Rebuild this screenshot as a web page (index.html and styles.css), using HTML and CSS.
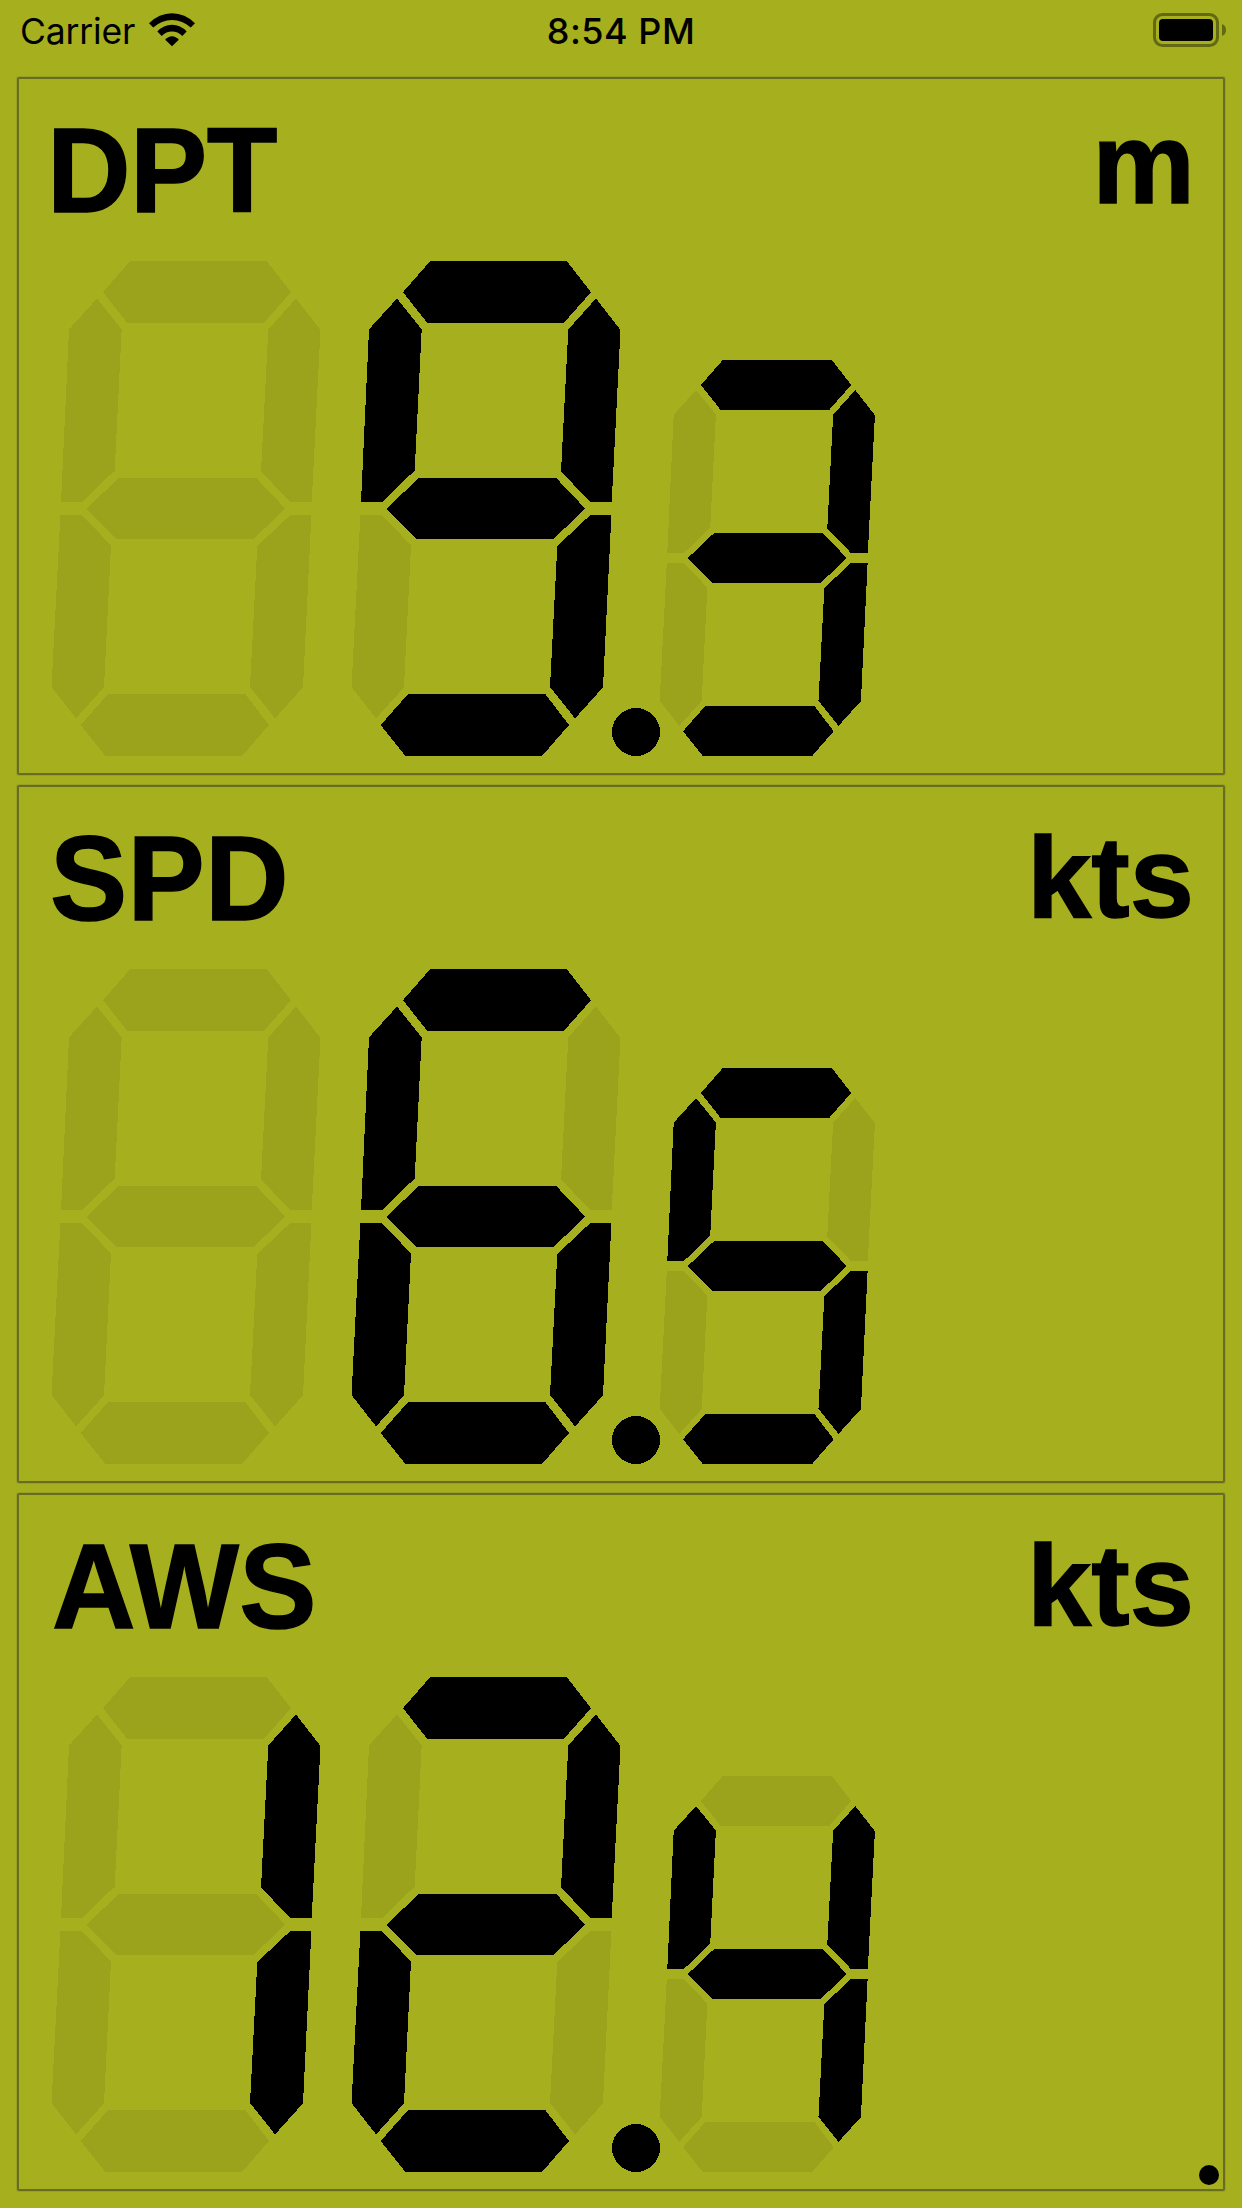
FILE: index.html
```html
<!DOCTYPE html>
<html lang="en">
<head>
<meta charset="utf-8">
<title>Instruments</title>
<link rel="stylesheet" href="styles.css">
</head>
<body>
<svg class="defs" width="0" height="0" aria-hidden="true">
  <defs>
    <polygon id="a" points="79.3,0 215.7,0 240,31.2 212.7,62 76.3,62 52,31.2"/>
    <polygon id="b" points="245,37.5 269.5,69 260.7,241 239.3,241 210,210.5 217.3,68.3"/>
    <polygon id="c" points="239.3,254 260.4,254 252,426.4 224,457.4 199,426 206.3,285"/>
    <polygon id="d" points="57.3,432.7 194,432.7 218,464 191,495 54.3,495 29.7,464"/>
    <polygon id="e" points="9.4,254 31,254 60,284.5 53,426.4 25,457.4 0.5,426"/>
    <polygon id="f" points="46,37.5 70.7,68.3 63.7,209.5 31,241 10,241 18,68.3"/>
    <polygon id="g" points="35.5,247.6 68,216.8 205,216.8 234.3,247.6 202.3,278.2 65.7,278.2"/>
    <g id="ghost"><use href="#a"/><use href="#b"/><use href="#c"/><use href="#d"/><use href="#e"/><use href="#f"/><use href="#g"/></g>
    <g id="n1"><use href="#b"/><use href="#c"/></g>
    <g id="n2"><use href="#a"/><use href="#b"/><use href="#d"/><use href="#e"/><use href="#g"/></g>
    <g id="n3"><use href="#a"/><use href="#b"/><use href="#c"/><use href="#d"/><use href="#g"/></g>
    <g id="n4"><use href="#b"/><use href="#c"/><use href="#f"/><use href="#g"/></g>
    <g id="n5"><use href="#a"/><use href="#c"/><use href="#d"/><use href="#f"/><use href="#g"/></g>
    <g id="n6"><use href="#a"/><use href="#c"/><use href="#d"/><use href="#e"/><use href="#f"/><use href="#g"/></g>
    <g id="n9"><use href="#a"/><use href="#b"/><use href="#c"/><use href="#d"/><use href="#f"/><use href="#g"/></g>
  </defs>
</svg>

<header class="status">
  <div class="status-left">
    <span class="carrier">Carrier</span>
    <svg class="wifi" width="46" height="34" viewBox="0 0 46 34">
      <path d="M0 10.2Q10 .2 23 .2T46 10.2L41.8 14.6Q33.5 7 23 7T4.2 14.6Z"/>
      <path d="M8.3 18.6Q14.5 11.8 23 11.8T37.7 18.6L33.3 22.9Q28.8 18.6 23 18.6T12.7 22.9Z"/>
      <path d="M16.2 26.8Q19 23.2 23 23.2T29.8 26.8L23 33.3Z"/>
    </svg>
  </div>
  <span class="time">8:54 PM</span>
  <svg class="battery" width="74" height="34" viewBox="0 0 74 34">
    <rect class="battery-case" x="1.5" y="1.5" width="63" height="31" rx="8"/>
    <rect x="6" y="6" width="54" height="22" rx="4"/>
    <path class="battery-tip" d="M69 11Q73 12.5 73 17T69 23Z"/>
  </svg>
</header>

<main class="gauges">
  <section class="gauge">
    <div class="heading"><h2 class="label label-depth">DPT</h2><span class="unit unit-short">m</span></div>
    <svg class="readout" width="826" height="495" viewBox="0 0 826 495">
      <g class="off"><use href="#ghost"/><use href="#ghost" x="300"/><use href="#ghost" transform="translate(608.3 99) scale(.8)"/></g>
      <use href="#n9" x="300"/>
      <circle cx="585" cy="471" r="24"/>
      <use href="#n3" transform="translate(608.3 99) scale(.8)"/>
    </svg>
  </section>
  <section class="gauge">
    <div class="heading"><h2 class="label label-speed">SPD</h2><span class="unit">kts</span></div>
    <svg class="readout" width="826" height="495" viewBox="0 0 826 495">
      <g class="off"><use href="#ghost"/><use href="#ghost" x="300"/><use href="#ghost" transform="translate(608.3 99) scale(.8)"/></g>
      <use href="#n6" x="300"/>
      <circle cx="585" cy="471" r="24"/>
      <use href="#n5" transform="translate(608.3 99) scale(.8)"/>
    </svg>
  </section>
  <section class="gauge">
    <div class="heading"><h2 class="label label-wind">AWS</h2><span class="unit">kts</span></div>
    <svg class="readout" width="826" height="495" viewBox="0 0 826 495">
      <g class="off"><use href="#ghost"/><use href="#ghost" x="300"/><use href="#ghost" transform="translate(608.3 99) scale(.8)"/></g>
      <use href="#n1"/>
      <use href="#n2" x="300"/>
      <circle cx="585" cy="471" r="24"/>
      <use href="#n4" transform="translate(608.3 99) scale(.8)"/>
    </svg>
    <span class="activity"></span>
  </section>
</main>
</body>
</html>
```
FILE: styles.css
```css
* { box-sizing: border-box; }

body {
  margin: 0;
  width: 1242px;
  height: 2208px;
  overflow: hidden;
  background: #a6af1e;
  color: #000;
  font-family: "Liberation Sans", sans-serif;
}

.defs { position: absolute; }

.status {
  display: grid;
  grid-template-columns: 1fr auto 1fr;
  align-items: start;
  height: 77px;
  padding: 13px 15px 0 20px;
  font-family: Inter, sans-serif;
  font-size: 36px;
  line-height: 36px;
}

.status-left { display: flex; }
.carrier { width: 129px; padding-top: 1px; font-size: 35.5px; letter-spacing: -0.15px; }
.time { margin-right: 5px; font-weight: 550; letter-spacing: 0.5px; }
.battery { justify-self: end; }
.battery-case { fill: none; stroke: #636912; stroke-width: 3; }
.battery-tip { fill: #636912; }

.gauges {
  display: flex;
  flex-direction: column;
  gap: 10px;
  padding: 0 17px;
}

.gauge {
  position: relative;
  height: 698px;
  padding: 0 32px;
  border: 2px solid #696c25;
  border-radius: 2px;
  box-shadow: 0 0 0 1px rgba(105, 108, 37, 0.22);
}

.heading {
  display: flex;
  justify-content: space-between;
  height: 182px;
}

.label, .unit { margin: 0; font-weight: 700; -webkit-text-stroke: 1.4px #000; }

.label {
  padding-top: 22px;
  font-size: 120.5px;
  line-height: 140px;
  transform: translateY(-0.5px) scaleX(0.96);
  transform-origin: left;
}

.label-depth { margin-left: -4px; letter-spacing: -0.5px; }
.label-speed { margin-left: -1px; letter-spacing: 0.3px; }
.label-wind { margin-left: 1px; letter-spacing: 0.5px; }

.unit {
  margin-right: -3px;
  padding-top: 21px;
  font-size: 115.5px;
  line-height: 140px;
  transform: translateY(-1px);
}

.unit-short { margin-right: -4px; padding-top: 15px; }

.readout { display: block; shape-rendering: crispEdges; }
.off { fill: #9aa31b; }

.activity {
  position: absolute;
  right: 4px;
  bottom: 4px;
  width: 20px;
  height: 20px;
  border-radius: 50%;
  background: #000;
}
```
